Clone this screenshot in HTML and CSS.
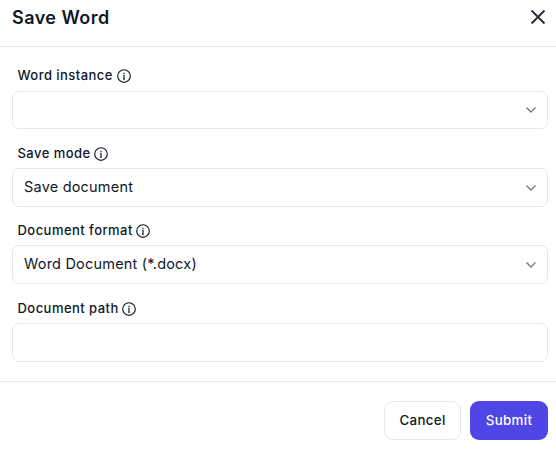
FILE: index.html
```html
<!DOCTYPE html>
<html lang="en">
<head>
<meta charset="utf-8">
<title>Save Word</title>
<link rel="stylesheet" href="styles.css">
</head>
<body>
<svg class="defs" width="0" height="0">
<symbol id="info" viewBox="0 0 14 14"><circle cx="7" cy="7" r="6.3"/><path d="M6.2 6.2H7v4M6.1 10.2h1.8M7 3.8v1.2"/></symbol>
<symbol id="chevron" viewBox="0 0 12 8"><path d="M1.5 1.5L6 6l4.5-4.5"/></symbol>
</svg>
<form class="dialog">
<header class="header"><h1 class="title">Save Word</h1><button class="close" type="button" aria-label="Close"><svg viewBox="0 0 16 16"><path d="M1.5 1.5l13 13M14.5 1.5l-13 13"/></svg></button></header>
<main class="fields">
<section class="field"><div class="label">Word instance<svg class="info"><use href="#info"/></svg></div><div class="control"><span></span><svg class="chevron"><use href="#chevron"/></svg></div></section>
<section class="field"><div class="label">Save mode<svg class="info"><use href="#info"/></svg></div><div class="control"><span>Save document</span><svg class="chevron"><use href="#chevron"/></svg></div></section>
<section class="field"><div class="label">Document format<svg class="info"><use href="#info"/></svg></div><div class="control"><span>Word Document (*.docx)</span><svg class="chevron"><use href="#chevron"/></svg></div></section>
<section class="field"><div class="label">Document path<svg class="info"><use href="#info"/></svg></div><div class="control"></div></section>
</main>
<footer class="footer"><button class="button cancel" type="button">Cancel</button><button class="button submit" type="button">Submit</button></footer>
</form>
</body>
</html>
```
FILE: styles.css
```css
* { box-sizing: border-box; }
body { margin: 0; background: #fff; color: #0f1729; font-family: Inter, sans-serif; }
.defs { display: none; }
.dialog { width: 556px; height: 451px; overflow: hidden; }
.header { height: 47px; padding: 3px 10px 0 12px; display: flex; align-items: flex-start; justify-content: space-between; border-bottom: 1px solid #e2e8f0; }
.title { margin: 0; font-size: 18px; line-height: 30px; font-weight: 600; letter-spacing: 0.45px; }
svg { fill: none; stroke: currentColor; flex: none; }
.close { width: 16px; height: 16px; margin-top: 6px; padding: 0; border: 0; background: none; color: #252a3a; }
.close svg { display: block; width: 16px; height: 16px; stroke-width: 1.8; }
.fields { height: 334px; padding: 19px 8px 0 12px; display: grid; grid-template-rows: 77px 77px 78px 64px; }
.label { height: 20px; margin-bottom: 5px; padding-left: 5.5px; display: flex; align-items: center; gap: 3.6px; font-size: 13px; line-height: 20px; font-weight: 500; letter-spacing: 0.46px; }
.field:first-child .label { height: 18px; margin-bottom: 7px; }
.info { width: 14px; height: 14px; margin-top: 1px; stroke-width: 1.15; }
.control { height: 39px; border: 1px solid #e2e8f0; border-radius: 7px; padding: 0 10px 0 11px; display: flex; align-items: center; justify-content: space-between; font-size: 14.5px; line-height: 20px; letter-spacing: 0.2px; }
.control span { padding-bottom: 1px; }
.field:first-child .control { height: 38px; }
.chevron { width: 12px; height: 8px; color: #777a83; stroke-width: 1.4; }
.footer { border-top: 1px solid #e2e8f0; padding: 19px 8px 0; display: flex; justify-content: flex-end; gap: 9px; }
.button { height: 39px; border-radius: 9px; padding: 0 0 1px; font: 500 13.3px Inter, sans-serif; letter-spacing: 0.35px; }
.cancel { width: 77px; border: 1px solid #e2e8f0; background: #fff; color: #0f1729; }
.submit { width: 78px; border: 0; background: #4f46e5; color: #fff; }
```
